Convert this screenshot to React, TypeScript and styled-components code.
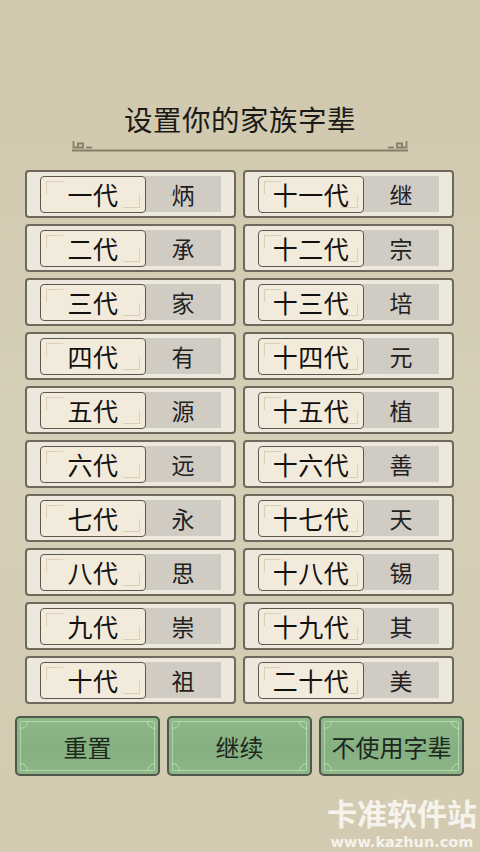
import styled, { createGlobalStyle } from 'styled-components'

const GlobalStyle = createGlobalStyle`
  html, body {
    margin: 0;
    padding: 0;
    background: #d3cab1;
  }
  * { box-sizing: border-box; }
`;

const FONT = `"Noto Sans CJK SC", "Noto Sans", sans-serif`;

const Page = styled.div`
  position: relative;
  width: 480px;
  height: 852px;
  overflow: hidden;
  background: linear-gradient(180deg, #d0c7ac 0%, #d6cfb8 50%, #d3cab1 100%);
  font-family: ${FONT};
  display: flex;
  flex-direction: column;
  align-items: center;
`;

const Title = styled.h1`
  margin: 98px 0 0;
  font-size: 28.5px;
  font-weight: 400;
  line-height: 42px;
  color: #1b1a17;
  letter-spacing: 0.5px;
`;

const Divider = styled.svg`
  display: block;
  width: 336px;
  height: 12px;
`;

const Grid = styled.div`
  margin-top: 18px;
  width: 430px;
  display: grid;
  grid-template-columns: 211px 211px;
  column-gap: 7px;
  row-gap: 6px;
`;

const Card = styled.div`
  height: 48px;
  border: 2px solid #6f685c;
  border-radius: 4px;
  background: #ece8dd;
  display: flex;
  align-items: center;
  padding: 0 13px 0 13px;
`;

const Label = styled.div`
  position: relative;
  z-index: 1;
  width: 107px;
  height: 37px;
  border: 1.5px solid #5e574c;
  border-radius: 4px;
  background: #f2eadb;
  display: flex;
  align-items: center;
  justify-content: center;
  font-size: 25px;
  color: #121110;
  letter-spacing: 0.5px;

  &::before {
    content: '';
    position: absolute;
    left: 5px;
    top: 4px;
    width: 16px;
    height: 12px;
    border-left: 1.5px solid #dccfb6;
    border-top: 1.5px solid #dccfb6;
  }
  &::after {
    content: '';
    position: absolute;
    right: 5px;
    bottom: 4px;
    width: 16px;
    height: 12px;
    border-right: 1.5px solid #dccfb6;
    border-bottom: 1.5px solid #dccfb6;
  }
`;

const Value = styled.div`
  width: 77px;
  height: 36px;
  margin-left: -1px;
  background: #d0ccc4;
  display: flex;
  align-items: center;
  justify-content: center;
  font-size: 23px;
  color: #22211e;
`;

const Buttons = styled.div`
  margin-top: 12px;
  width: 450px;
  display: grid;
  grid-template-columns: repeat(3, 145px);
  column-gap: 7px;
`;

const Button = styled.button`
  position: relative;
  height: 60px;
  padding: 0;
  border: 2px solid #4f584d;
  border-radius: 5px;
  background: linear-gradient(180deg, #8fb98a 0%, #85b081 55%, #8db689 100%);
  font-family: ${FONT};
  font-size: 24px;
  color: #1d271c;
  cursor: pointer;

  &::before {
    content: '';
    position: absolute;
    inset: 3px;
    border: 1px solid rgba(214, 236, 196, 0.55);
    border-radius: 2px;
  }
`;

const Corner = styled.span<{ $pos: 'tl' | 'tr' | 'bl' | 'br' }>`
  position: absolute;
  width: 16px;
  height: 16px;
  border: 1px solid rgba(214, 236, 196, 0.6);
  border-radius: 50%;
  ${({ $pos }) => ($pos.includes('t') ? 'top: -8px;' : 'bottom: -8px;')}
  ${({ $pos }) => ($pos.includes('l') ? 'left: -8px;' : 'right: -8px;')}
`;

const CornerBox = styled.span`
  position: absolute;
  inset: 3px;
  overflow: hidden;
`;

const ButtonText = styled.span`
  position: relative;
`;

const Watermark = styled.div`
  position: absolute;
  right: 3px;
  bottom: 2px;
  display: flex;
  flex-direction: column;
  align-items: center;
  color: #f6f3ec;
  font-weight: 700;
  pointer-events: none;
`;

const WmTitle = styled.div`
  font-size: 30px;
  line-height: 30px;
`;

const WmUrl = styled.div`
  font-family: "DejaVu Sans", sans-serif;
  font-size: 14.5px;
  line-height: 15px;
  margin-top: 8px;
`;

const rows: [string, string, string, string][] = [
  ['一代', '炳', '十一代', '继'],
  ['二代', '承', '十二代', '宗'],
  ['三代', '家', '十三代', '培'],
  ['四代', '有', '十四代', '元'],
  ['五代', '源', '十五代', '植'],
  ['六代', '远', '十六代', '善'],
  ['七代', '永', '十七代', '天'],
  ['八代', '思', '十八代', '锡'],
  ['九代', '崇', '十九代', '其'],
  ['十代', '祖', '二十代', '美'],
];

function Entry({ label, value }: { label: string; value: string }) {
  return (
    <Card>
      <Label>{label}</Label>
      <Value>{value}</Value>
    </Card>
  );
}

function GreenButton({ children }: { children: string }) {
  return (
    <Button>
      <CornerBox>
        <Corner $pos="tl" />
        <Corner $pos="tr" />
        <Corner $pos="bl" />
        <Corner $pos="br" />
      </CornerBox>
      <ButtonText>{children}</ButtonText>
    </Button>
  );
}

export default function App() {
  const entries = rows.flatMap(([l1, v1, l2, v2]) => [
    { label: l1, value: v1 },
    { label: l2, value: v2 },
  ]);
  return (
    <>
      <GlobalStyle />
      <Page>
        <Title>设置你的家族字辈</Title>
        <Divider viewBox="0 0 336 12">
          <g fill="none" stroke="#877d66" strokeWidth="1.8">
            <path d="M1.5 1 V7.5 H11 V3.5 H6 V7" />
            <path d="M14 7.5 H20" />
            <path d="M334.5 1 V7.5 H325 V3.5 H330 V7" />
            <path d="M322 7.5 H316" />
          </g>
          <line x1="0" y1="10.5" x2="336" y2="10.5" stroke="#877d66" strokeWidth="2" />
        </Divider>
        <Grid>
          {entries.map((e) => (
            <Entry key={e.label} label={e.label} value={e.value} />
          ))}
        </Grid>
        <Buttons>
          <GreenButton>重置</GreenButton>
          <GreenButton>继续</GreenButton>
          <GreenButton>不使用字辈</GreenButton>
        </Buttons>
        <Watermark>
          <WmTitle>卡准软件站</WmTitle>
          <WmUrl>www.kazhun.com</WmUrl>
        </Watermark>
      </Page>
    </>
  );
}
